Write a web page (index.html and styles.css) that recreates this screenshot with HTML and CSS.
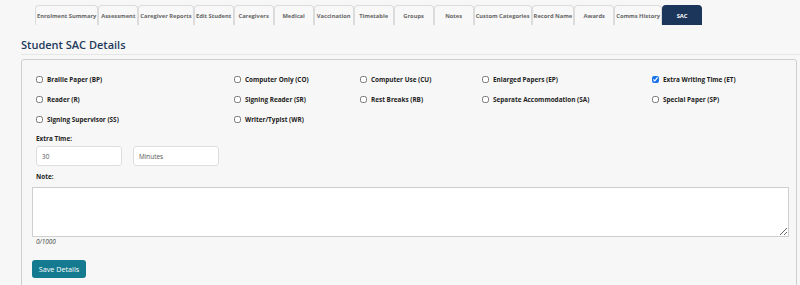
FILE: index.html
```html
<!DOCTYPE html>
<html lang="en">
<head>
  <meta charset="UTF-8" />
  <title>Student SAC Details</title>
  <meta name="viewport" content="width=device-width, initial-scale=1.0" />
  <link rel="stylesheet" href="styles.css">
</head>
<body>
  <!-- student tabs -->
  <nav class="tabs">
    <a class="tab">Enrolment Summary</a>
    <a class="tab">Assessment</a>
    <a class="tab">Caregiver Reports</a>
    <a class="tab">Edit Student</a>
    <a class="tab">Caregivers</a>
    <a class="tab">Medical</a>
    <a class="tab">Vaccination</a>
    <a class="tab">Timetable</a>
    <a class="tab">Groups</a>
    <a class="tab">Notes</a>
    <a class="tab">Custom Categories</a>
    <a class="tab">Record Name</a>
    <a class="tab">Awards</a>
    <a class="tab">Comms History</a>
    <a class="tab active">SAC</a>
  </nav>

  <h2 class="page-title">Student SAC Details</h2>

  <section class="panel">
    <div class="options">
      <label class="opt"><input type="checkbox"><span>Braille Paper (BP)</span></label>
      <label class="opt"><input type="checkbox"><span>Computer Only (CO)</span></label>
      <label class="opt"><input type="checkbox"><span>Computer Use (CU)</span></label>
      <label class="opt"><input type="checkbox"><span>Enlarged Papers (EP)</span></label>
      <label class="opt"><input type="checkbox" checked><span>Extra Writing Time (ET)</span></label>

      <label class="opt"><input type="checkbox"><span>Reader (R)</span></label>
      <label class="opt"><input type="checkbox"><span>Signing Reader (SR)</span></label>
      <label class="opt"><input type="checkbox"><span>Rest Breaks (RB)</span></label>
      <label class="opt"><input type="checkbox"><span>Separate Accommodation (SA)</span></label>
      <label class="opt"><input type="checkbox"><span>Special Paper (SP)</span></label>

      <label class="opt"><input type="checkbox"><span>Signing Supervisor (SS)</span></label>
      <label class="opt"><input type="checkbox"><span>Writer/Typist (WR)</span></label>
    </div>

    <div class="field">
      <label class="field-label">Extra Time:</label>
      <div class="time-row">
        <input type="text" class="box" value="30">
        <input type="text" class="box" value="Minutes">
      </div>
    </div>

    <div class="field note">
      <label class="field-label">Note:</label>
      <textarea class="note-box"></textarea>
      <div class="counter">0/1000</div>
    </div>

    <button class="save">Save Details</button>
  </section>
</body>
</html>
```

FILE: styles.css
```css
/* ---------- base ---------- */
*,*::before,*::after{box-sizing:border-box;}
body{
  margin:0;
  background:#f7f7f7;
  font-family:"Open Sans","Noto Sans",sans-serif;
  color:#222;
  overflow:hidden;
}

/* ---------- tabs ---------- */
.tabs{
  display:flex;
  padding:5px 0 0 35px;
  height:25px;
}
.tab{
  min-width:40px;
  height:20px;
  padding:0 1px;
  display:flex;
  align-items:center;
  justify-content:center;
  border:1px solid #dcdcdc;
  border-bottom:none;
  border-radius:4px 4px 0 0;
  background:#f8f8f8;
  color:#666;
  font-size:5.75px;
  font-weight:700;
  white-space:nowrap;
  overflow:hidden;
}
.tab.active{
  background:#1b365a;
  border-color:#1b365a;
  color:#fff;
}

/* ---------- heading ---------- */
.page-title{
  margin:12px 0 0 21px;
  padding-bottom:2px;
  border-bottom:1px solid #e6e6e6;
  color:#1e3a5c;
  font-size:11px;
  font-weight:600;
  line-height:15px;
}

/* ---------- panel ---------- */
.panel{
  margin:4px 3px 0 21px;
  border:1px solid #cfcfcf;
  border-radius:3px;
  padding:9px 7px 0 10px;
  height:229px;
}

.options{
  display:grid;
  grid-template-columns:198px 126px 122px 170px 1fr;
  padding-left:4px;
}
.opt{
  display:flex;
  align-items:center;
  height:20px;
  font-size:6.4px;
  font-weight:700;
  color:#222;
}
.opt input{
  width:7px;
  height:7px;
  margin:0 4px 0 0;
  accent-color:#1a73e8;
}

.field{padding-left:4px;}
.field-label{
  display:block;
  font-size:6.4px;
  font-weight:700;
  line-height:12px;
  margin-top:4px;
}
.time-row{
  display:flex;
  gap:11px;
  margin-top:1px;
}
.box{
  width:86px;
  height:20px;
  border:1px solid #dedede;
  border-radius:3px;
  background:#fff;
  padding:0 5px;
  font-family:inherit;
  font-size:6.4px;
  color:#555;
}

.note{padding-left:0;margin-top:5px;}
.note .field-label{margin:0 0 4px 4px;}
.note-box{
  display:block;
  width:100%;
  height:50px;
  border:1px solid #cfcfcf;
  background:#fff;
  resize:vertical;
}
.counter{
  margin:0 0 0 4px;
  font-size:6.4px;
  font-style:italic;
  color:#444;
  line-height:10px;
}

.save{
  margin-top:13px;
  width:54px;
  height:18px;
  border:none;
  border-radius:3px;
  background:#147a8f;
  color:#fff;
  font-family:inherit;
  font-size:7.2px;
  padding:0;
}
```
